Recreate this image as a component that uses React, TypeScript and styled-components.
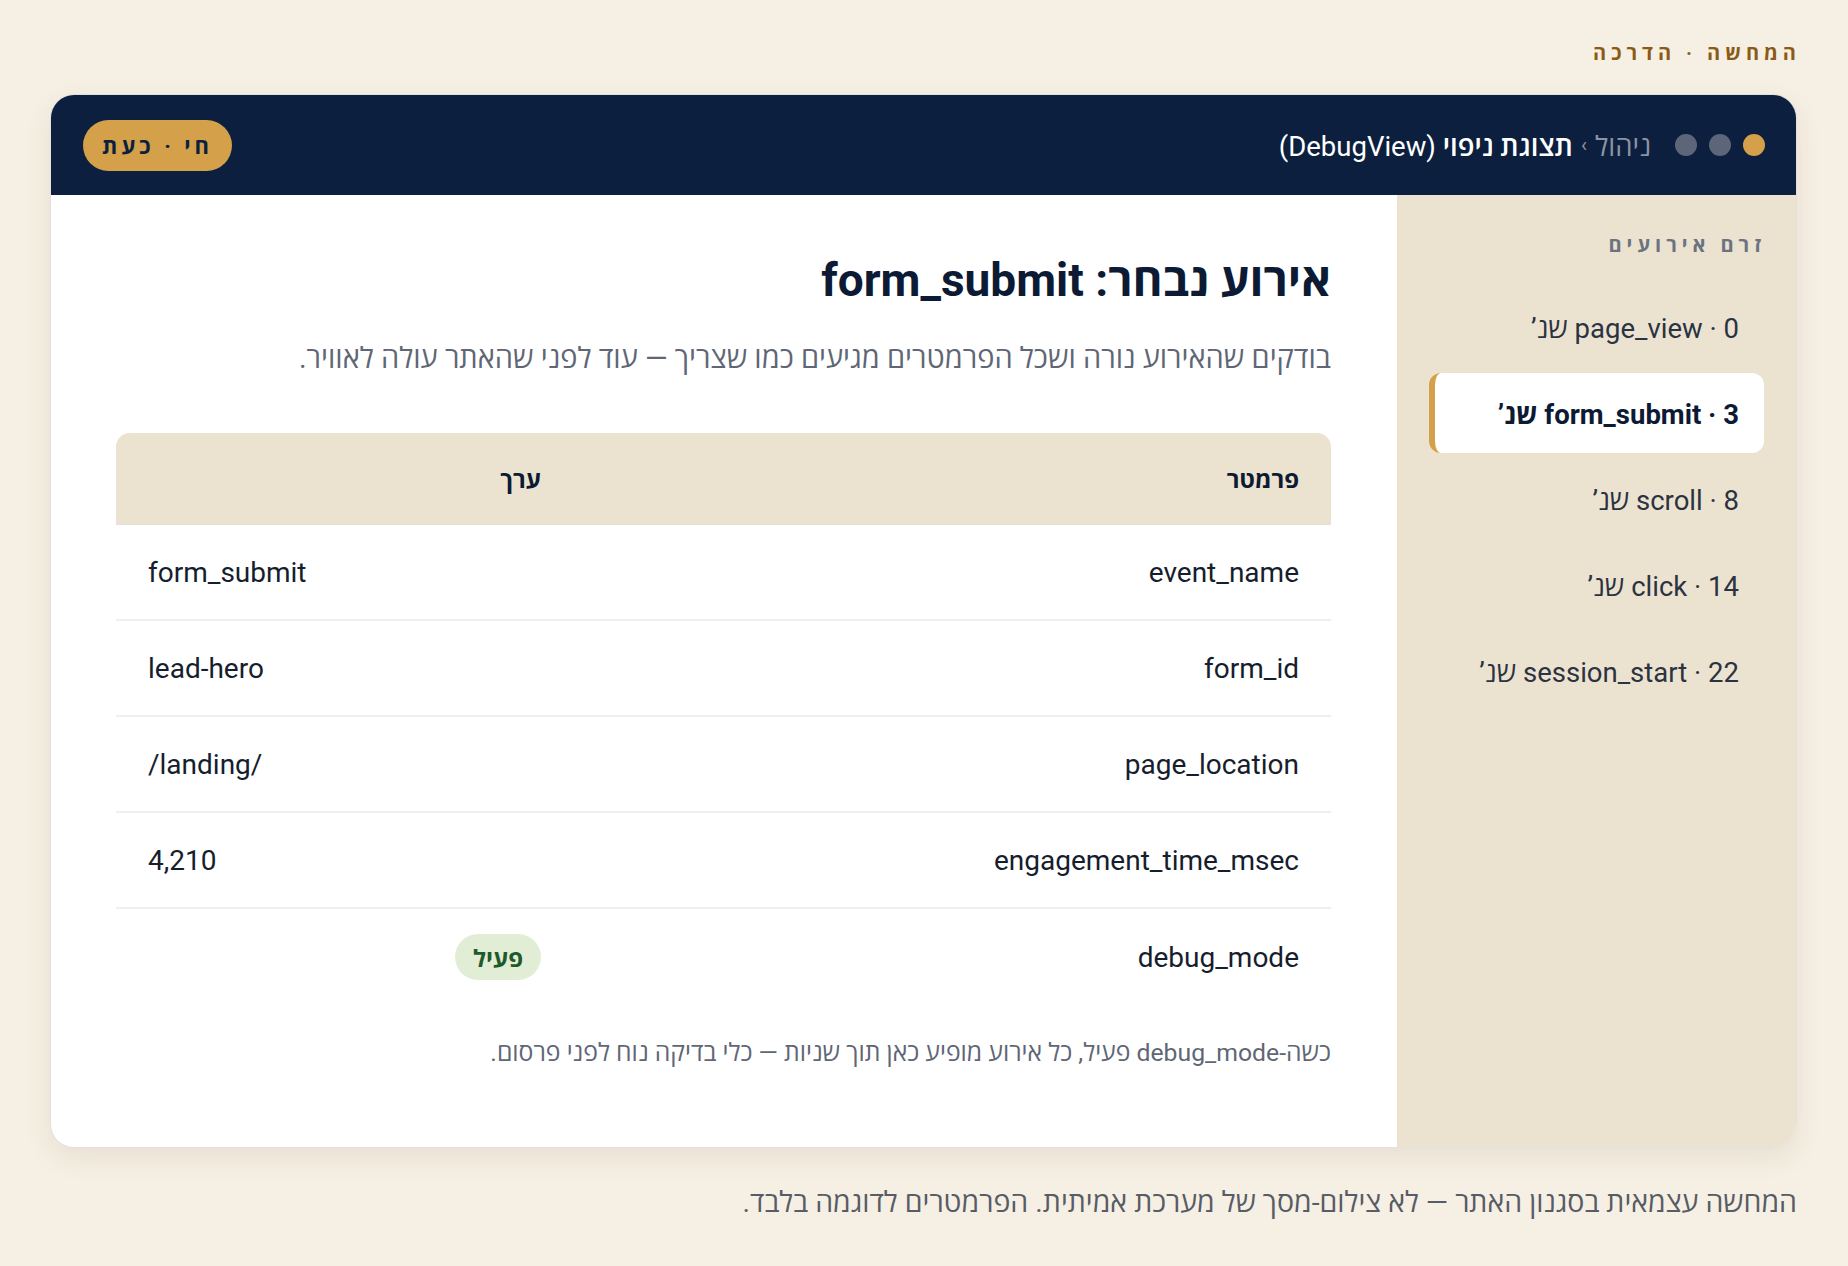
import { FC, Fragment } from 'react'
import styled, { createGlobalStyle } from 'styled-components'

const GlobalStyle = createGlobalStyle`
  html, body {
    margin: 0;
    padding: 0;
    background: #f6efe3;
  }
  body {
    font-family: Roboto, "Open Sans", sans-serif;
    color: #0f1b33;
  }
  * { box-sizing: border-box; }
`

const Page = styled.div`
  direction: rtl;
  min-height: 1266px;
  padding: 40px 51px 40px 50px;
  display: flex;
  flex-direction: column;
`

const Eyebrow = styled.div`
  font-size: 20px;
  font-weight: 700;
  letter-spacing: 5px;
  color: #8a5b17;
  line-height: 26px;
  margin: 0 -4px 28px 0;
`

const Card = styled.div`
  background: #fff;
  border: 1px solid #e3e1dc;
  border-radius: 24px;
  overflow: hidden;
  box-shadow: 0 10px 28px rgba(60, 45, 20, 0.08);
  display: flex;
  flex-direction: column;
`

const Header = styled.div`
  height: 100px;
  background: #0c1f3f;
  display: flex;
  align-items: center;
  justify-content: space-between;
  padding: 0 31px 0 32px;
`

const HeaderStart = styled.div`
  display: flex;
  align-items: center;
  gap: 24px;
`

const Dots = styled.div`
  display: flex;
  gap: 12px;
`

const Dot = styled.span<{ $color: string }>`
  width: 22px;
  height: 22px;
  border-radius: 50%;
  background: ${p => p.$color};
`

const Crumbs = styled.div`
  font-size: 27.5px;
  color: #8c93a3;
  display: flex;
  gap: 8px;
  align-items: center;
`

const CrumbSep = styled.span`
  font-size: 20px;
  color: #8c93a3;
`

const CrumbCurrent = styled.span`
  color: #fff;
  font-weight: 600;
`

const CrumbLatin = styled.span`
  font-weight: 400;
`

const LivePill = styled.div`
  height: 51px;
  padding: 0 19px;
  border-radius: 26px;
  background: #d4a04a;
  color: #0c1f3f;
  font-size: 22px;
  font-weight: 700;
  letter-spacing: 4px;
  display: flex;
  align-items: center;
`

const Body = styled.div`
  display: flex;
`

const Sidebar = styled.aside`
  width: 399px;
  flex-shrink: 0;
  background: #ebe3d0;
  padding: 36px 32px 32px 32px;
`

const SideTitle = styled.div`
  font-size: 20px;
  font-weight: 700;
  letter-spacing: 5px;
  color: #6b7280;
  line-height: 28px;
  margin: 0 -2px 28px 0;
`

const EventList = styled.div`
  display: flex;
  flex-direction: column;
  gap: 6px;
`

const EventItem = styled.div<{ $active?: boolean }>`
  height: 80px;
  display: flex;
  align-items: center;
  padding: 0 25px;
  font-size: 27.5px;
  border-radius: 12px;
  color: ${p => (p.$active ? '#0c1a33' : '#2b3242')};
  font-weight: ${p => (p.$active ? 700 : 400)};
  background: ${p => (p.$active ? '#fff' : 'transparent')};
  border-left: 6px solid ${p => (p.$active ? '#d4a04a' : 'transparent')};
`

const Main = styled.main`
  flex: 1;
  padding: 57px 66px 77px 65px;
`

const Title = styled.h1`
  margin: 0;
  font-size: 46px;
  font-weight: 700;
  line-height: 56px;
  color: #0c1a33;
`

const Lead = styled.p`
  margin: 30px 0 55px;
  font-size: 29px;
  line-height: 40px;
  color: #5f6675;
`

const Table = styled.div`
  display: grid;
  grid-template-columns: 758px 1fr;
`

const HeadCell = styled.div<{ $first?: boolean }>`
  background: #ebe3d0;
  height: 92px;
  display: flex;
  align-items: center;
  padding: 0 32px;
  font-size: 24px;
  font-weight: 700;
  color: #0c1a33;
  border-bottom: 1px solid #e2e0dc;
  border-top-right-radius: ${p => (p.$first ? '14px' : '0')};
  border-top-left-radius: ${p => (p.$first ? '0' : '14px')};
`

const Cell = styled.div<{ $ltr?: boolean; $last?: boolean }>`
  height: 96px;
  display: flex;
  align-items: center;
  padding: 0 32px;
  font-size: 28px;
  color: #161e2e;
  direction: ${p => (p.$ltr ? 'ltr' : 'rtl')};
  border-bottom: ${p => (p.$last ? 'none' : '2px solid #efefef')};
`

const Badge = styled.span`
  height: 46px;
  padding: 0 18px;
  border-radius: 23px;
  background: #e2edd6;
  color: #1e5a2b;
  font-size: 24px;
  font-weight: 700;
  display: inline-flex;
  align-items: center;
`

const Note = styled.p`
  margin: 31px 0 0;
  font-size: 24.75px;
  line-height: 34px;
  color: #5f6675;
`

const Caption = styled.p`
  margin: 37px 0 0;
  font-size: 28.5px;
  line-height: 36px;
  color: #575c66;
`

const events = [
  { name: 'page_view', sec: 0 },
  { name: 'form_submit', sec: 3, active: true },
  { name: 'scroll', sec: 8 },
  { name: 'click', sec: 14 },
  { name: 'session_start', sec: 22 },
]

const params = [
  { key: 'event_name', value: 'form_submit' },
  { key: 'form_id', value: 'lead-hero' },
  { key: 'page_location', value: '/landing/' },
  { key: 'engagement_time_msec', value: '4,210' },
]

const App: FC = () => {
  return (
    <>
      <GlobalStyle />
      <Page>
        <Eyebrow>המחשה · הדרכה</Eyebrow>
        <Card>
          <Header>
            <HeaderStart>
              <Dots>
                <Dot $color="#d4a04a" />
                <Dot $color="#5d6679" />
                <Dot $color="#5d6679" />
              </Dots>
              <Crumbs>
                <span>ניהול</span>
                <CrumbSep>›</CrumbSep>
                <CrumbCurrent>
                  תצוגת ניפוי <CrumbLatin>(DebugView)</CrumbLatin>
                </CrumbCurrent>
              </Crumbs>
            </HeaderStart>
            <LivePill>חי · כעת</LivePill>
          </Header>
          <Body>
            <Sidebar>
              <SideTitle>זרם אירועים</SideTitle>
              <EventList>
                {events.map(ev => (
                  <EventItem key={ev.name} $active={ev.active}>
                    {ev.name} · {ev.sec} שנ’
                  </EventItem>
                ))}
              </EventList>
            </Sidebar>
            <Main>
              <Title>אירוע נבחר: form_submit</Title>
              <Lead>בודקים שהאירוע נורה ושכל הפרמטרים מגיעים כמו שצריך — עוד לפני שהאתר עולה לאוויר.</Lead>
              <Table>
                <HeadCell $first>פרמטר</HeadCell>
                <HeadCell>ערך</HeadCell>
                {params.map(row => (
                  <Fragment key={row.key}>
                    <Cell>{row.key}</Cell>
                    <Cell $ltr>{row.value}</Cell>
                  </Fragment>
                ))}
                <Cell $last>debug_mode</Cell>
                <Cell $last>
                  <Badge>פעיל</Badge>
                </Cell>
              </Table>
              <Note>כשה-debug_mode פעיל, כל אירוע מופיע כאן תוך שניות — כלי בדיקה נוח לפני פרסום.</Note>
            </Main>
          </Body>
        </Card>
        <Caption>המחשה עצמאית בסגנון האתר — לא צילום-מסך של מערכת אמיתית. הפרמטרים לדוגמה בלבד.</Caption>
      </Page>
    </>
  )
}

export default App
